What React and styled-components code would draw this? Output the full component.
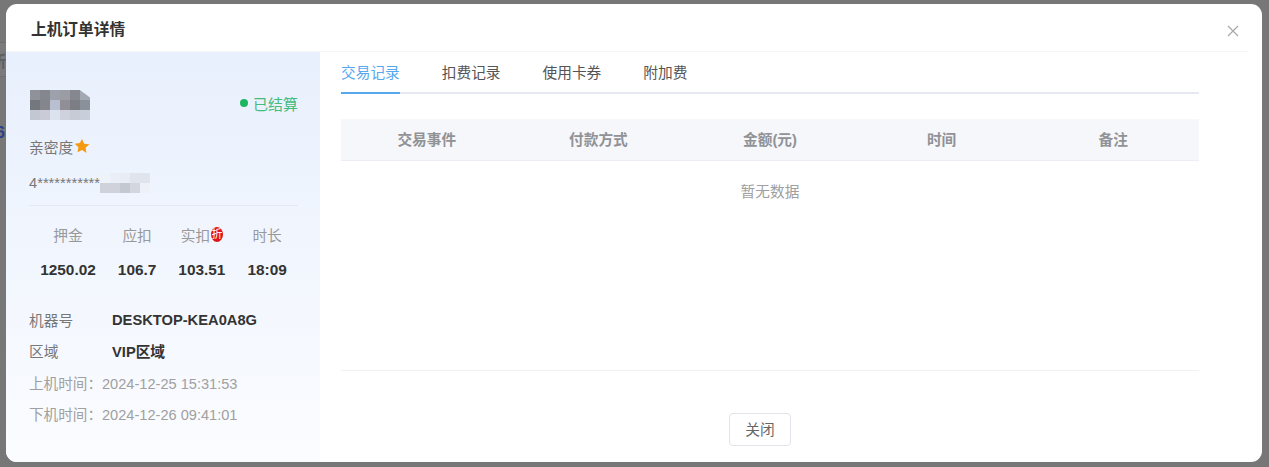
import React from "react";
import styled, { createGlobalStyle } from "styled-components";

const GlobalStyle = createGlobalStyle`
  html, body {
    margin: 0;
    padding: 0;
    height: 100%;
    overflow: hidden;
    background: #777;
    font-family: "Liberation Sans", "Noto Sans CJK SC", sans-serif;
  }
`;

const Backdrop = styled.div`
  position: relative;
  width: 1269px;
  height: 467px;
  padding: 4px 7px 5px 6px;
  box-sizing: border-box;
  background: #777;
`;

const GhostBand = styled.div`
  position: absolute;
  left: 0;
  top: 42px;
  width: 6px;
  height: 33px;
  background: #7b7b7b;
  border-top: 1px solid #6e6e6e;
  border-bottom: 1px solid #6e6e6e;
`;

const Ghost = styled.span`
  position: absolute;
  left: ${(props) => props.left}px;
  top: ${(props) => props.top}px;
  font-size: 16px;
  font-weight: bold;
  color: ${(props) => props.color};
`;

const Modal = styled.div`
  position: relative;
  height: 100%;
  background: #fff;
  border-radius: 11px;
  overflow: hidden;
  display: flex;
  flex-direction: column;
`;

const Header = styled.div`
  height: 48px;
  flex: none;
  box-sizing: border-box;
  margin-right: 14px;
  padding: 0 9px 0 25px;
  display: flex;
  align-items: center;
  justify-content: space-between;
  border-bottom: 1px solid #f4f6f8;
`;

const Title = styled.div`
  font-size: 15.7px;
  font-weight: bold;
  color: #333;
  margin-top: 2px;
`;

const CloseIcon = styled.svg`
  width: 12px;
  height: 12px;
  margin-top: 6px;
  stroke: #a5a8ad;
  stroke-width: 1.2;
  fill: none;
`;

const Body = styled.div`
  flex: 1;
  display: flex;
  min-height: 0;
`;

const Side = styled.aside`
  width: 314px;
  flex: none;
  box-sizing: border-box;
  padding: 38px 22px 0 23px;
  background: linear-gradient(180deg, #e8f0fd 0%, #fbfcff 100%);
`;

const UserRow = styled.div`
  display: flex;
  justify-content: space-between;
  align-items: center;
  height: 30px;
`;

const Mosaic = styled.svg`
  display: block;
  flex: none;
  filter: blur(0.6px);
  clip-path: ${(props) => props.$clip || "none"};
  margin-left: ${(props) => props.$offset || 0}px;
`;

const Status = styled.div`
  display: flex;
  align-items: center;
  gap: 5px;
  font-size: 15px;
  color: #45bb7e;
  margin-top: -4px;
`;

const Dot = styled.i`
  width: 8px;
  height: 8px;
  border-radius: 50%;
  background: #1fb45f;
`;

const Intimacy = styled.div`
  display: flex;
  align-items: center;
  gap: 1px;
  margin-top: 15px;
  height: 22px;
  font-size: 14.7px;
  color: #777;
`;

const Account = styled.div`
  display: flex;
  align-items: center;
  margin-top: 14px;
  height: 24px;
  font-size: 14.7px;
  color: #777;
`;

const Divider = styled.div`
  height: 1px;
  margin-top: 10px;
  background: #e4e8ef;
`;

const Stats = styled.div`
  display: flex;
  justify-content: center;
  gap: 22px;
  margin-top: 18px;
`;

const Stat = styled.div`
  display: flex;
  flex-direction: column;
  align-items: center;
  gap: 16px;
`;

const StatLabel = styled.div`
  display: flex;
  align-items: center;
  height: 20px;
  font-size: 14.7px;
  color: #999;
  white-space: nowrap;
`;

const StatValue = styled.div`
  font-size: 15.4px;
  line-height: 20px;
  font-weight: bold;
  color: #333;
`;

const Badge = styled.span`
  width: 12px;
  height: 15px;
  margin-left: 1px;
  border-radius: 50%;
  overflow: hidden;
  background: #e0151b;
  color: #fff;
  font-size: 11px;
  line-height: 15px;
  text-align: center;
`;

const InfoList = styled.div`
  margin-top: 24px;
`;

const InfoRow = styled.div`
  display: flex;
  align-items: center;
  height: 31.3px;
  font-size: 14.7px;
  color: #777;
`;

const InfoKey = styled.span`
  width: 83px;
  flex: none;
`;

const InfoValue = styled.span`
  font-weight: bold;
  color: #333;
`;

const TimeRow = styled(InfoRow)`
  color: #a0a0a0;
  font-size: 14.6px;
`;

const Main = styled.main`
  flex: 1;
  min-width: 0;
  display: flex;
  flex-direction: column;
  padding: 0 63px 0 21px;
`;

const Tabs = styled.div`
  display: flex;
  gap: 42px;
  height: 42px;
  flex: none;
  box-sizing: border-box;
  border-bottom: 2px solid #e6e9ef;
`;

const Tab = styled.div`
  height: 42px;
  box-sizing: border-box;
  padding-top: 11px;
  font-size: 14.7px;
  line-height: 20px;
  color: ${(props) => (props.$active ? "#58a8ee" : "#555")};
  border-bottom: 2px solid ${(props) => (props.$active ? "#58a8ee" : "transparent")};
`;

const TableHead = styled.div`
  display: grid;
  grid-template-columns: repeat(5, 1fr);
  height: 42px;
  margin-top: 25px;
  flex: none;
  background: #f5f7fa;
  border-bottom: 1px solid #ebeef5;
  box-sizing: border-box;
`;

const HeadCell = styled.div`
  display: flex;
  align-items: center;
  justify-content: center;
  padding-bottom: 3px;
  font-size: 14.7px;
  font-weight: bold;
  color: #909296;
`;

const TableBody = styled.div`
  height: 210px;
  flex: none;
  box-sizing: border-box;
  padding-top: 21px;
  border-bottom: 1px solid #eff1f4;
  text-align: center;
  font-size: 14.7px;
  line-height: 20px;
  color: #a0a0a0;
`;

const Footer = styled.div`
  display: flex;
  justify-content: center;
  padding: 42px 20px 0 0;
`;

const CloseButton = styled.button`
  width: 62px;
  height: 33px;
  padding: 0 0 3px;
  background: #fff;
  border: 1px solid #e2e4ea;
  border-radius: 4px;
  font-family: inherit;
  font-size: 14.7px;
  color: #666;
`;

const PIXELS_NAME = [
  ["#8f9299", "#85878e", "#9ca1ab", "#9c9da4", "#85888f", "#a3a8b1"],
  ["#75777e", "#85868b", "#b7bfd0", "#918f95", "#7b7e85", "#8b919b"],
  ["#c3c7d1", "#c9ccd6", "#dce2ee", "#ced2dc", "#c6cbd5", "#c9cfda"],
];

const PIXELS_ACCOUNT = [
  ["#eef2f9", "#eaeef6", "#e8ecf4", "#e0e4ec", "#e0e4ec"],
  ["#cfd2da", "#cfd2da", "#c4c8d0", "#d2d6de", "#eef1f7"],
];

function Pixels({ rows, cell, ...rest }) {
  return (
    <Mosaic
      width={rows[0].length * cell}
      height={rows.length * cell}
      {...rest}
    >
      {rows.map((row, y) =>
        row.map((fill, x) => (
          <rect key={`${x}-${y}`} x={x * cell} y={y * cell} width={cell} height={cell} fill={fill} />
        ))
      )}
    </Mosaic>
  );
}

const stats = [
  { label: "押金", value: "1250.02" },
  { label: "应扣", value: "106.7" },
  { label: "实扣", value: "103.51", discount: true },
  { label: "时长", value: "18:09" },
];

const columns = ["交易事件", "付款方式", "金额(元)", "时间", "备注"];
const tabs = ["交易记录", "扣费记录", "使用卡券", "附加费"];

export default function App() {
  return (
    <>
      <GlobalStyle />
      <Backdrop>
        <GhostBand />
        <Ghost left={-10} top={48} color="#5f5f5f">所</Ghost>
        <Ghost left={-4} top={124} color="#2b3f86">6</Ghost>
        <Modal>
          <Header>
            <Title>上机订单详情</Title>
            <CloseIcon viewBox="0 0 12 12">
              <path d="M1 1l10 10M11 1L1 11" />
            </CloseIcon>
          </Header>
          <Body>
            <Side>
              <UserRow>
                <Pixels
                  rows={PIXELS_NAME}
                  cell={10}
                  $offset={1}
                  $clip="polygon(0 0, 83% 0, 100% 25%, 100% 100%, 0 100%)"
                />
                <Status>
                  <Dot />
                  已结算
                </Status>
              </UserRow>
              <Intimacy>
                亲密度
                <svg width="16" height="16" viewBox="0 0 24 24" fill="#f59a13">
                  <path d="M12 1.500l3.300 7 7.700 1-5.600 5.300 1.400 7.700L12 18l-6.800 3.500 1.400-7.700L1 8.500l7.700-1z" />
                </svg>
              </Intimacy>
              <Account>
                4***********
                <Pixels rows={PIXELS_ACCOUNT} cell={10} />
              </Account>
              <Divider />
              <Stats>
                {stats.map((s) => (
                  <Stat key={s.label}>
                    <StatLabel>
                      {s.label}
                      {s.discount && <Badge>折</Badge>}
                    </StatLabel>
                    <StatValue>{s.value}</StatValue>
                  </Stat>
                ))}
              </Stats>
              <InfoList>
                <InfoRow>
                  <InfoKey>机器号</InfoKey>
                  <InfoValue>DESKTOP-KEA0A8G</InfoValue>
                </InfoRow>
                <InfoRow>
                  <InfoKey>区域</InfoKey>
                  <InfoValue>VIP区域</InfoValue>
                </InfoRow>
                <TimeRow>上机时间：2024-12-25 15:31:53</TimeRow>
                <TimeRow>下机时间：2024-12-26 09:41:01</TimeRow>
              </InfoList>
            </Side>
            <Main>
              <Tabs>
                {tabs.map((t, i) => (
                  <Tab key={t} $active={i === 0}>
                    {t}
                  </Tab>
                ))}
              </Tabs>
              <TableHead>
                {columns.map((c) => (
                  <HeadCell key={c}>{c}</HeadCell>
                ))}
              </TableHead>
              <TableBody>暂无数据</TableBody>
              <Footer>
                <CloseButton>关闭</CloseButton>
              </Footer>
            </Main>
          </Body>
        </Modal>
      </Backdrop>
    </>
  );
}
